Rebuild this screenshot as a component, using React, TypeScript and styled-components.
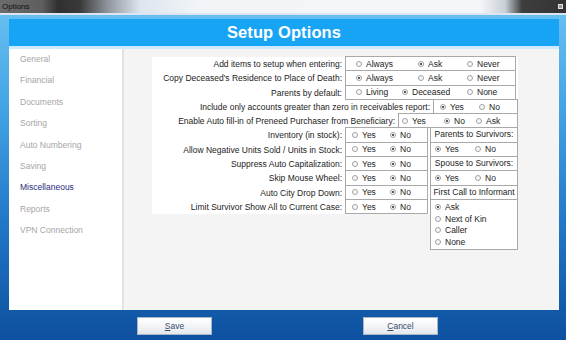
import React from "react";
import styled, { createGlobalStyle } from "styled-components";

const GlobalStyle = createGlobalStyle`
  html, body { margin: 0; padding: 0; }
  body {
    width: 566px;
    height: 340px;
    overflow: hidden;
    font-family: "Liberation Sans", Arial, sans-serif;
    font-size: 8.5px;
    color: #1c1c1c;
  }
  * { box-sizing: border-box; }
`;

const Window = styled.div`
  width: 566px;
  height: 340px;
  display: flex;
  flex-direction: column;
  overflow: hidden;
  background: linear-gradient(180deg, #6cc2f2 0%, #45a6e6 30%, #2278c8 65%, #0d509f 100%);
`;

const TitleBar = styled.div`
  height: 15px;
  flex: none;
  display: flex;
  align-items: center;
  padding: 0 2px 0 2px;
  border-bottom: 2px solid #dbe6f0;
  background: linear-gradient(
    90deg,
    #6c6c6c 0px,
    #5e5e5e 42px,
    #303030 58px,
    #3a3a3a 80px,
    #8f969e 108px,
    #dde5ee 140px,
    #f2f5f8 200px,
    #f4f6f9 480px,
    #c9d0d8 505px,
    #3e3e3e 522px,
    #333333 566px
  );
`;

const TitleText = styled.span`
  font-size: 8px;
  color: #111;
  flex: 1;
`;

const CloseBox = styled.span`
  width: 5px;
  height: 5px;
  border: 1px solid #e0e0e0;
  background: #9a9a9a;
  margin-right: 1px;
`;

const FrameBody = styled.div`
  flex: 1;
  display: flex;
  flex-direction: column;
  padding: 4px 7px 0 9px;
`;

const Header = styled.div`
  height: 30px;
  flex: none;
  display: flex;
  align-items: center;
  justify-content: center;
  background: #18a4f5;
  border-bottom: 3px solid #cde9fb;
  color: #fff;
  font-weight: bold;
  font-size: 16.5px;
  letter-spacing: 0.1px;
`;

const Content = styled.div`
  height: 261px;
  flex: none;
  display: flex;
`;

const Sidebar = styled.div`
  width: 115px;
  flex: none;
  background: #fff;
  border-right: 2px solid #e3e3e3;
`;

const NavItem = styled.div<{ $active?: boolean }>`
  height: 21.4px;
  line-height: 21.4px;
  padding-left: 11px;
  color: ${(p) => (p.$active ? "#2b2b7e" : "#a6a6a6")};
`;

const Main = styled.div`
  flex: 1;
  background: #f4f4f4;
  padding: 8px 0 0 28px;
`;

const Table = styled.div`
  width: 366px;
`;

const TopSection = styled.div`
  background: #fff;
`;

const Row = styled.div`
  height: 14.3px;
  display: flex;
`;

const Label = styled.div<{ $w: number }>`
  width: ${(p) => p.$w}px;
  flex: none;
  text-align: right;
  padding-right: 3px;
  line-height: 14.3px;
  white-space: nowrap;
`;

const Box = styled.div<{ $w: number; $pad: number }>`
  width: ${(p) => p.$w}px;
  flex: none;
  height: 15.3px;
  margin-top: -1px;
  border: 1px solid #a9a9a9;
  background: #fff;
  display: flex;
  align-items: center;
  padding-left: ${(p) => p.$pad}px;
`;

const Option = styled.div<{ $w?: number }>`
  display: flex;
  align-items: center;
  gap: 4px;
  flex: none;
  width: ${(p) => (p.$w ? `${p.$w}px` : "auto")};
  white-space: nowrap;
`;

const Dot = styled.span<{ $on?: boolean }>`
  position: relative;
  flex: none;
  width: 6px;
  height: 6px;
  border-radius: 50%;
  border: 1px solid #a2a2a2;
  background: #fafafa;
  &::after {
    content: "";
    display: ${(p) => (p.$on ? "block" : "none")};
    position: absolute;
    left: 1px;
    top: 1px;
    width: 2px;
    height: 2px;
    border-radius: 50%;
    background: #262626;
  }
`;

const BottomSection = styled.div`
  display: flex;
  align-items: flex-start;
  box-shadow: inset 0 1px 0 #e8e8e8;
`;

const LeftPart = styled.div`
  width: 278px;
  flex: none;
  background: #fff;
`;

const RightCol = styled.div`
  width: 88px;
  flex: none;
  display: flex;
  flex-direction: column;
`;

const CellLabel = styled.div`
  height: 15.3px;
  margin-top: -1px;
  border: 1px solid #a9a9a9;
  background: #fff;
  text-align: center;
  line-height: 13.3px;
  white-space: nowrap;
`;

const CellRadios = styled.div`
  height: 15.3px;
  margin-top: -1px;
  border: 1px solid #a9a9a9;
  background: #fff;
  display: flex;
  align-items: center;
  padding-left: 4px;
`;

const ListBox = styled.div`
  height: 51px;
  margin-top: -1px;
  border: 1px solid #a9a9a9;
  background: #fff;
  padding: 1px 0 0 4px;
  display: flex;
  flex-direction: column;
`;

const ListOption = styled(Option)`
  height: 11.7px;
`;

const Footer = styled.div`
  height: 30px;
  flex: none;
  display: flex;
  gap: 151px;
  padding: 7px 0 0 128px;
`;

const Button = styled.div`
  width: 75px;
  height: 18px;
  display: flex;
  align-items: center;
  justify-content: center;
  border: 1px solid #a9b6c8;
  background: linear-gradient(180deg, #ffffff 0%, #f3f5f8 50%, #e3e7ed 100%);
  color: #3c4b68;
  font-size: 8.5px;
  u { text-decoration: underline; }
`;

type Opt = { label: string; w?: number; on?: boolean };
type RowData = { label: string; labelW: number; boxW: number; pad: number; opts: Opt[] };

const topRows: RowData[] = [
  {
    label: "Add items to setup when entering:",
    labelW: 193, boxW: 171, pad: 10,
    opts: [{ label: "Always", w: 62 }, { label: "Ask", w: 49, on: true }, { label: "Never" }],
  },
  {
    label: "Copy Deceased's Residence to Place of Death:",
    labelW: 193, boxW: 171, pad: 10,
    opts: [{ label: "Always", w: 62, on: true }, { label: "Ask", w: 49 }, { label: "Never" }],
  },
  {
    label: "Parents by default:",
    labelW: 193, boxW: 171, pad: 10,
    opts: [{ label: "Living", w: 46 }, { label: "Deceased", w: 65, on: true }, { label: "None" }],
  },
  {
    label: "Include only accounts greater than zero in receivables report:",
    labelW: 281, boxW: 85, pad: 6,
    opts: [{ label: "Yes", w: 39, on: true }, { label: "No" }],
  },
  {
    label: "Enable Auto fill-in of Preneed Purchaser from Beneficiary:",
    labelW: 246, boxW: 120, pad: 3,
    opts: [{ label: "Yes", w: 42 }, { label: "No", w: 32, on: true }, { label: "Ask" }],
  },
];

const yesNoRows = [
  "Inventory (in stock):",
  "Allow Negative Units Sold / Units in Stock:",
  "Suppress Auto Capitalization:",
  "Skip Mouse Wheel:",
  "Auto City Drop Down:",
  "Limit Survivor Show All to Current Case:",
];

const navItems = [
  "General",
  "Financial",
  "Documents",
  "Sorting",
  "Auto Numbering",
  "Saving",
  "Miscellaneous",
  "Reports",
  "VPN Connection",
];

const Radio: React.FC<{ opt: Opt }> = ({ opt }) => (
  <Option $w={opt.w}>
    <Dot $on={opt.on} />
    {opt.label}
  </Option>
);

export default function App() {
  return (
    <>
      <GlobalStyle />
      <Window>
        <TitleBar>
          <TitleText>Options</TitleText>
          <CloseBox />
        </TitleBar>
        <FrameBody>
          <Header>Setup Options</Header>
          <Content>
            <Sidebar>
              {navItems.map((n) => (
                <NavItem key={n} $active={n === "Miscellaneous"}>
                  {n}
                </NavItem>
              ))}
            </Sidebar>
            <Main>
              <Table>
                <TopSection>
                  {topRows.map((r) => (
                    <Row key={r.label}>
                      <Label $w={r.labelW}>{r.label}</Label>
                      <Box $w={r.boxW} $pad={r.pad}>
                        {r.opts.map((o) => (
                          <Radio key={o.label} opt={o} />
                        ))}
                      </Box>
                    </Row>
                  ))}
                </TopSection>
                <BottomSection>
                  <LeftPart>
                    {yesNoRows.map((l) => (
                      <Row key={l}>
                        <Label $w={193}>{l}</Label>
                        <Box $w={83} $pad={6}>
                          <Radio opt={{ label: "Yes", w: 38 }} />
                          <Radio opt={{ label: "No", on: true }} />
                        </Box>
                      </Row>
                    ))}
                  </LeftPart>
                  <RightCol>
                    <CellLabel>Parents to Survivors:</CellLabel>
                    <CellRadios>
                      <Radio opt={{ label: "Yes", w: 40, on: true }} />
                      <Radio opt={{ label: "No" }} />
                    </CellRadios>
                    <CellLabel>Spouse to Survivors:</CellLabel>
                    <CellRadios>
                      <Radio opt={{ label: "Yes", w: 40, on: true }} />
                      <Radio opt={{ label: "No" }} />
                    </CellRadios>
                    <CellLabel>First Call to Informant</CellLabel>
                    <ListBox>
                      <ListOption>
                        <Dot $on />
                        Ask
                      </ListOption>
                      <ListOption>
                        <Dot />
                        Next of Kin
                      </ListOption>
                      <ListOption>
                        <Dot />
                        Caller
                      </ListOption>
                      <ListOption>
                        <Dot />
                        None
                      </ListOption>
                    </ListBox>
                  </RightCol>
                </BottomSection>
              </Table>
            </Main>
          </Content>
          <Footer>
            <Button>
              <span>
                <u>S</u>ave
              </span>
            </Button>
            <Button>
              <span>
                <u>C</u>ancel
              </span>
            </Button>
          </Footer>
        </FrameBody>
      </Window>
    </>
  );
}
